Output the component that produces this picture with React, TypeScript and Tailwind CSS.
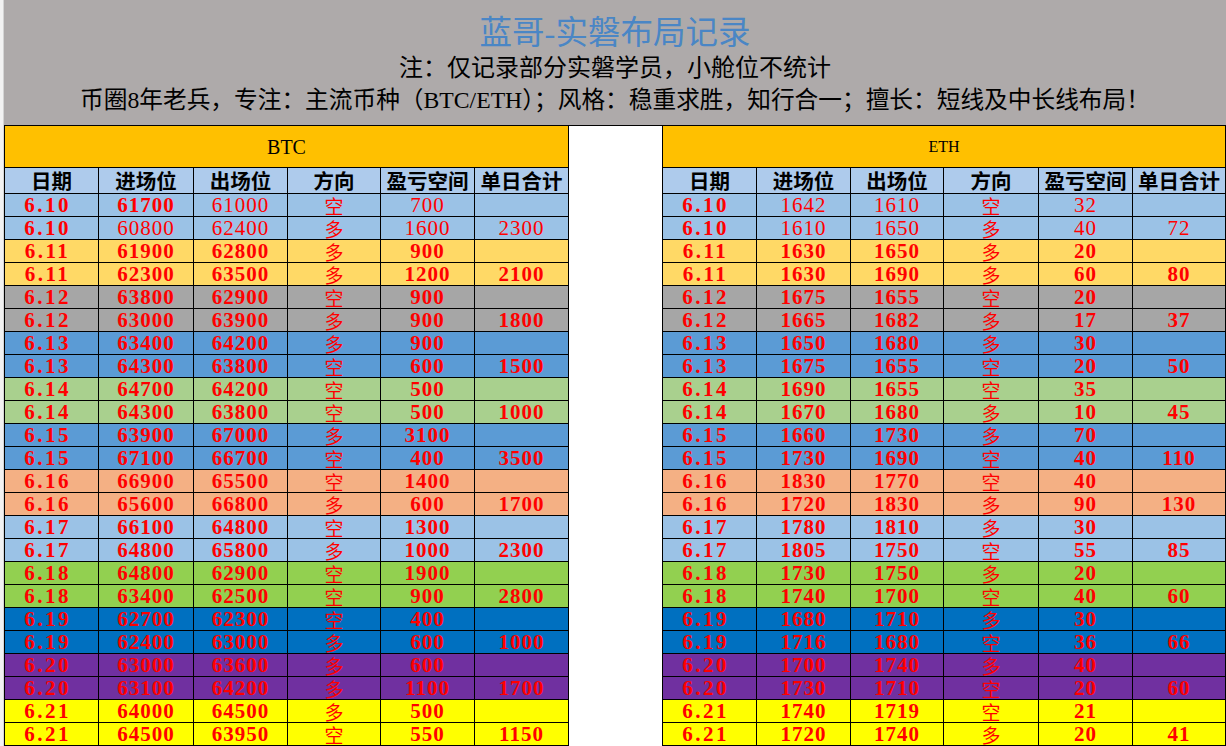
import React from "react";

type Row = [string, string, string, string, string, string];

const btcRows: Row[] = [
  ["6.10", "61700", "61000", "空", "700", ""],
  ["6.10", "60800", "62400", "多", "1600", "2300"],
  ["6.11", "61900", "62800", "多", "900", ""],
  ["6.11", "62300", "63500", "多", "1200", "2100"],
  ["6.12", "63800", "62900", "空", "900", ""],
  ["6.12", "63000", "63900", "多", "900", "1800"],
  ["6.13", "63400", "64200", "多", "900", ""],
  ["6.13", "64300", "63800", "空", "600", "1500"],
  ["6.14", "64700", "64200", "空", "500", ""],
  ["6.14", "64300", "63800", "空", "500", "1000"],
  ["6.15", "63900", "67000", "多", "3100", ""],
  ["6.15", "67100", "66700", "空", "400", "3500"],
  ["6.16", "66900", "65500", "空", "1400", ""],
  ["6.16", "65600", "66800", "多", "600", "1700"],
  ["6.17", "66100", "64800", "空", "1300", ""],
  ["6.17", "64800", "65800", "多", "1000", "2300"],
  ["6.18", "64800", "62900", "空", "1900", ""],
  ["6.18", "63400", "62500", "空", "900", "2800"],
  ["6.19", "62700", "62300", "空", "400", ""],
  ["6.19", "62400", "63000", "多", "600", "1000"],
  ["6.20", "63000", "63600", "多", "600", ""],
  ["6.20", "63100", "64200", "多", "1100", "1700"],
  ["6.21", "64000", "64500", "多", "500", ""],
  ["6.21", "64500", "63950", "空", "550", "1150"],
];

const ethRows: Row[] = [
  ["6.10", "1642", "1610", "空", "32", ""],
  ["6.10", "1610", "1650", "多", "40", "72"],
  ["6.11", "1630", "1650", "多", "20", ""],
  ["6.11", "1630", "1690", "多", "60", "80"],
  ["6.12", "1675", "1655", "空", "20", ""],
  ["6.12", "1665", "1682", "多", "17", "37"],
  ["6.13", "1650", "1680", "多", "30", ""],
  ["6.13", "1675", "1655", "空", "20", "50"],
  ["6.14", "1690", "1655", "空", "35", ""],
  ["6.14", "1670", "1680", "多", "10", "45"],
  ["6.15", "1660", "1730", "多", "70", ""],
  ["6.15", "1730", "1690", "空", "40", "110"],
  ["6.16", "1830", "1770", "空", "40", ""],
  ["6.16", "1720", "1830", "多", "90", "130"],
  ["6.17", "1780", "1810", "多", "30", ""],
  ["6.17", "1805", "1750", "空", "55", "85"],
  ["6.18", "1730", "1750", "多", "20", ""],
  ["6.18", "1740", "1700", "空", "40", "60"],
  ["6.19", "1680", "1710", "多", "30", ""],
  ["6.19", "1716", "1680", "空", "36", "66"],
  ["6.20", "1700", "1740", "多", "40", ""],
  ["6.20", "1730", "1710", "空", "20", "60"],
  ["6.21", "1740", "1719", "空", "21", ""],
  ["6.21", "1720", "1740", "多", "20", "41"],
];

// one colour per day, two rows each
const dayColors = [
  "bg-[#9bc2e6]",
  "bg-[#ffd966]",
  "bg-[#a6a6a6]",
  "bg-[#5b9bd5]",
  "bg-[#a9d08e]",
  "bg-[#5b9bd5]",
  "bg-[#f4b084]",
  "bg-[#9bc2e6]",
  "bg-[#92d050]",
  "bg-[#0070c0]",
  "bg-[#7030a0]",
  "bg-[#ffff00]",
];

const headers = ["日期", "进场位", "出场位", "方向", "盈亏空间", "单日合计"];

// cells written in the thin (non bold) weight in the sheet
const thinBtc: Record<number, number[]> = { 0: [2, 3, 4], 1: [1, 2, 3, 4, 5] };
const thinEth: Record<number, number[]> = { 0: [1, 2, 3, 4], 1: [1, 2, 3, 4, 5] };

function Sheet({
  title,
  rows,
  thin,
  cols,
  titleClass,
}: {
  title: string;
  rows: Row[];
  thin: Record<number, number[]>;
  cols: string;
  titleClass: string;
}) {
  return (
    <div className="border-l border-black">
      <div
        className={`h-[42px] border-b border-r border-black bg-[#ffc000] flex items-center justify-center text-black leading-none font-['Liberation_Serif',serif] ${titleClass}`}
      >
        {title}
      </div>
      <div className={`grid ${cols} h-[26px] bg-[#aecbec]`}>
        {headers.map((h) => (
          <div
            key={h}
            className="border-r border-b border-black flex items-center justify-center text-[20.5px] font-bold text-black leading-none font-['Noto_Sans_CJK_SC',sans-serif] whitespace-nowrap"
          >
            {h}
          </div>
        ))}
      </div>
      {rows.map((r, i) => (
        <div key={i} className={`grid ${cols} h-[23px] ${dayColors[Math.floor(i / 2)]}`}>
          {r.map((c, j) => {
            const isThin = thin[i]?.includes(j);
            let font = `text-[21px] font-['Liberation_Serif',serif] ${isThin ? "font-normal" : "font-bold"}`;
            if (j === 3) font = "text-[19px] font-normal font-['Noto_Sans_CJK_SC',sans-serif]";
            else if (j === 0) font += " tracking-[2.5px] pr-[8px]";
            else font += " tracking-[1px]";
            return (
              <div
                key={j}
                className={`border-r border-b border-black flex items-center justify-center leading-none text-[#ff0000] whitespace-nowrap ${font}`}
              >
                {c}
              </div>
            );
          })}
        </div>
      ))}
    </div>
  );
}

export default function App() {
  return (
    <div className="w-[1226px] h-[746px] overflow-hidden flex bg-white">
      {/* excel gutter on the far left */}
      <div className="w-[4px] shrink-0 bg-[#f2f2f2] border-r border-[#d4d4d4]" />

      <div className="w-[1222px] shrink-0">
        {/* Header */}
        <div className="h-[126px] bg-[#aeaaaa] border-b border-black flex flex-col items-center font-['Liberation_Serif','Noto_Sans_CJK_SC',serif]">
          <div className="mt-[14px] h-[38px] flex items-center text-[32.5px] leading-none text-[#4a86c5]">
            蓝哥-实磐布局记录
          </div>
          <div className="h-[32px] flex items-center text-[24px] leading-none text-black">
            注：仅记录部分实磐学员，小舱位不统计
          </div>
          <div className="h-[34px] flex items-center text-[23.7px] leading-none text-black whitespace-nowrap">
            币圈8年老兵，专注：主流币种（BTC/ETH）；风格：稳重求胜，知行合一；擅长：短线及中长线布局！
          </div>
        </div>

        <div className="flex">
          <div className="w-[565px] shrink-0">
            <Sheet
              title="BTC"
              rows={btcRows}
              thin={thinBtc}
              cols="grid-cols-[94px_95px_94px_93px_94px_94px]"
              titleClass="text-[20px]"
            />
          </div>
          <div className="w-[93px] shrink-0 bg-white" />
          <div className="w-[564px] shrink-0">
            <Sheet
              title="ETH"
              rows={ethRows}
              thin={thinEth}
              cols="grid-cols-[94px_94px_93px_95px_94px_93px]"
              titleClass="text-[16px]"
            />
          </div>
        </div>
      </div>
    </div>
  );
}
